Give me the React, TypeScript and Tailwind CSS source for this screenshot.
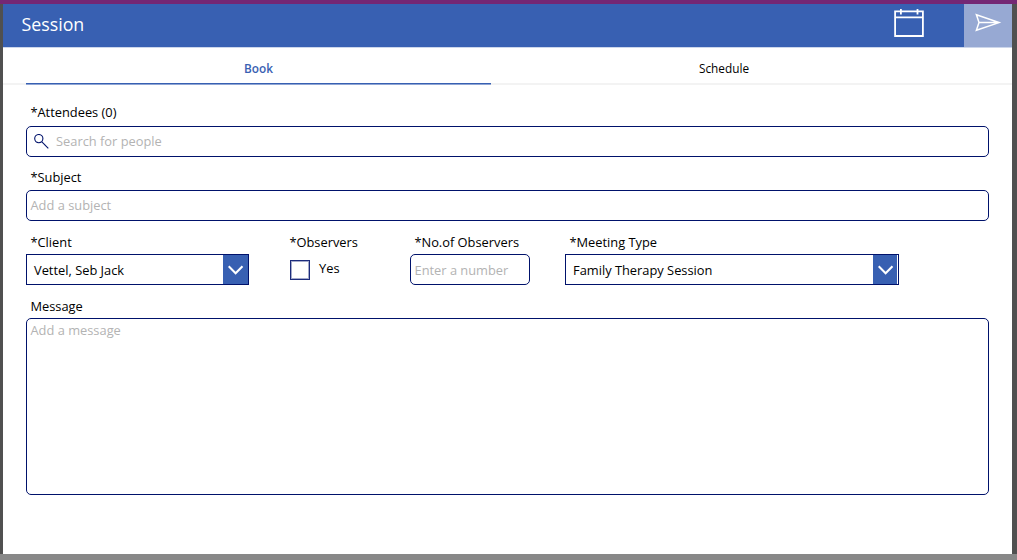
import type { ReactNode } from "react";

function Label({ children }: { children: ReactNode }) {
  return <div className="h-[18px] pl-[4.4px] text-[12.85px] leading-[18px] whitespace-nowrap text-black">{children}</div>;
}

function Select({ value, className, arrow }: { value: string; className: string; arrow: string }) {
  return (
    <div role="combobox" className={`flex h-[31px] border border-[#00126b] ${className}`}>
      <span className="flex-1 pl-[7px] text-[12.85px] leading-[30px] whitespace-nowrap text-black">{value}</span>
      <span className={`flex items-center bg-[#3860b2] ${arrow}`}>
        <svg width="16" height="10" viewBox="0 0 16 10" fill="none" stroke="white" strokeWidth="2.1" className="ml-[5px]">
          <path d="M.7 1.2 7.6 8.2 14.5 1.2" />
        </svg>
      </span>
    </div>
  );
}

function CalendarIcon() {
  return (
    <svg width="32" height="30" viewBox="0 0 32 30" fill="none" stroke="white">
      <path d="M2.1 3.4H29.9V28H2.1Z" strokeWidth="1.8" />
      <path d="M2 9.4H30M7.9 1V6.5M24.5 1V6.5" strokeWidth="1.8" />
    </svg>
  );
}

function SendIcon() {
  return (
    <svg width="28" height="20" viewBox="0 0 28 20" fill="none" stroke="white" strokeWidth="1.5">
      <path d="M2.4 1.8 25 9.6 2.4 17.2 5 9.6ZM5 9.6H25" />
    </svg>
  );
}

export default function App() {
  return (
    <div className="flex h-[560px] w-[1017px] flex-col overflow-hidden bg-[#888888] font-['Open_Sans',sans-serif]">
      <div className="h-1 shrink-0 bg-[#742774]" />
      <div className="flex h-[550px] shrink-0 flex-col border-r-[5px] border-l-[3px] border-[#505050] bg-white">
        <header className="flex h-[43px] shrink-0 bg-[#3860b2]">
          <h1 className="flex-1 pl-[18.5px] text-[17.8px] leading-[41px] text-white">Session</h1>
          <button className="mr-[39px] flex w-8 items-start pt-1" aria-label="Calendar">
            <CalendarIcon />
          </button>
          <button className="flex w-12 items-start bg-[#97a9d3] pt-[9px] pl-[10px]" aria-label="Send">
            <SendIcon />
          </button>
        </header>
        <div className="h-px shrink-0 bg-[#ccd6eb]" />
        <nav className="flex h-[37px] shrink-0 border-b-2 border-[#f3f3f3] pl-[23px] text-center text-[11.8px] leading-[40px]">
          <div className="h-9 w-[465px] border-b border-[#3860b2] font-semibold text-[#3860b2] shadow-[0_1px_0_#8fa5d4]">Book</div>
          <div className="w-[466px] text-black">Schedule</div>
        </nav>
        <main className="flex w-[986px] flex-col pt-[18px] pl-[23px]">
          <Label>*Attendees (0)</Label>
          <div className="mt-[5px] flex h-[31px] items-center rounded-[5px] border border-[#00126b] pl-[7px]">
            <svg width="16" height="16" viewBox="0 0 16 16" fill="none" stroke="#00126b" strokeWidth="1.1">
              <circle cx="4.8" cy="4.6" r="4.1" />
              <path d="M7.9 7.8 14.3 14.3" />
            </svg>
            <span className="ml-[6px] text-[12.85px] leading-[29px] text-[#b3b3b3]">Search for people</span>
          </div>
          <div className="mt-[11px]">
            <Label>*Subject</Label>
            <div className="mt-1 h-[31px] rounded-[5px] border border-[#00126b] pl-[3.5px] text-[12.85px] leading-[29px] text-[#b3b3b3]">
              Add a subject
            </div>
          </div>
          <div className="mt-3 flex">
            <div className="w-[259px]">
              <Label>*Client</Label>
              <Select value="Vettel, Seb Jack" className="mt-[3px] w-[223px]" arrow="w-[25px]" />
            </div>
            <div className="w-[125px]">
              <Label>*Observers</Label>
              <div className="mt-[3px] flex pt-[6px] pl-[5px]">
                <span role="checkbox" aria-checked="false" className="h-5 w-5 border border-[#1c2c7c] inset-ring inset-ring-[#a4aacb]" />
                <span className="ml-[9px] text-[12.85px] leading-[17px] text-black">Yes</span>
              </div>
            </div>
            <div className="w-[155px] shrink-0">
              <Label>*No.of Observers</Label>
              <div className="mt-[3px] h-[31px] w-[120px] rounded-[5px] border border-[#00126b] pl-[3.5px] text-[12.85px] leading-[30px] text-[#b3b3b3]">
                Enter a number
              </div>
            </div>
            <div>
              <Label>*Meeting Type</Label>
              <Select value="Family Therapy Session" className="mt-[3px] w-[334px]" arrow="mr-px w-6" />
            </div>
          </div>
          <div className="mt-3">
            <Label>Message</Label>
            <div className="mt-[3px] h-[177px] rounded-[5px] border border-[#00126b] pl-[3.5px] text-[12.85px] leading-[22px] text-[#b3b3b3]">
              Add a message
            </div>
          </div>
        </main>
      </div>
    </div>
  );
}
